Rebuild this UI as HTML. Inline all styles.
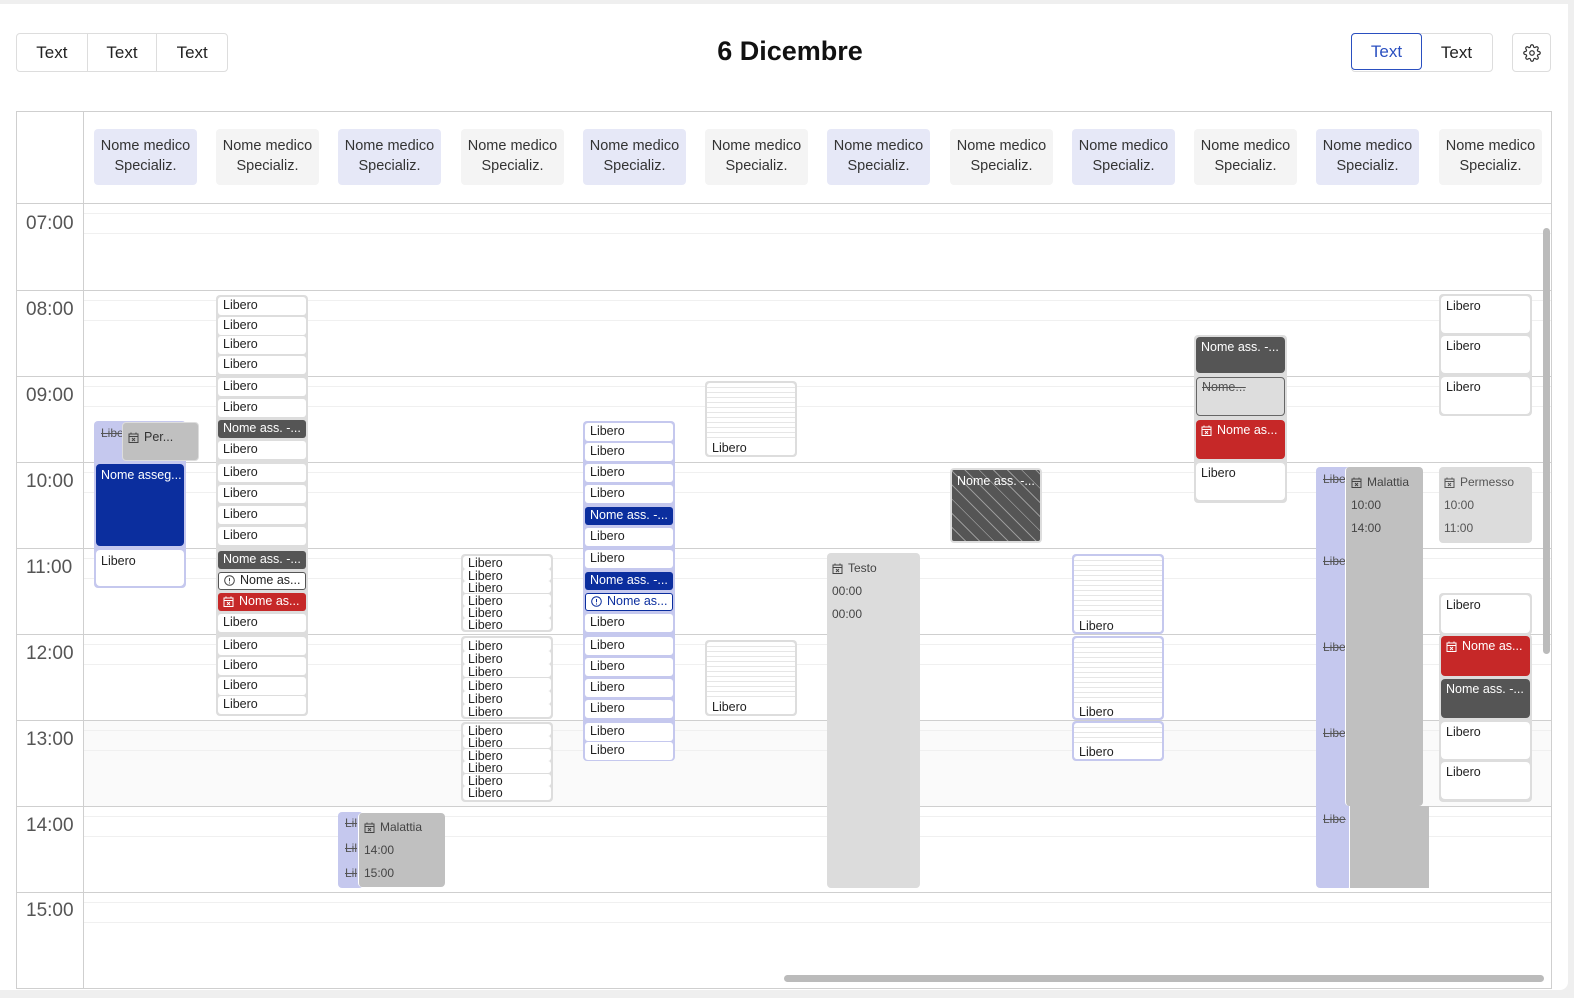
<!DOCTYPE html>
<html style="overflow:hidden"><head><meta charset="utf-8"><style>
*{box-sizing:border-box;margin:0;padding:0}
html,body{overflow:hidden}
body{width:1574px;height:998px;background:#efefef;font-family:"Liberation Sans",sans-serif;position:relative;color:#333}
.card{position:absolute;left:0;top:4px;width:1568px;height:986px;background:#fff;border-radius:0 0 8px 0}
.a{position:absolute}
.bg{position:absolute;top:33px;height:39px;border:1px solid #ddd;border-radius:4px;display:flex;background:#fff}
.bg div{height:100%;display:flex;align-items:center;justify-content:center;font-size:17px;color:#222;border-right:1px solid #ddd}
.bg div:last-child{border-right:none}
.hl{position:absolute;left:16px;width:1535px;height:1px;background:#cfcfcf}
.sl{position:absolute;left:84px;width:1467px;height:1px;background:#f0f0f0}
.tm{position:absolute;left:26px;font-size:19px;color:#555}
.ch{position:absolute;top:129px;width:103px;height:56px;border-radius:4px;font-size:14.5px;color:#333;text-align:center;line-height:19.5px;padding-top:8px}
.e{position:absolute;height:18px;font-size:12.5px;line-height:17px;padding-left:5px;border-radius:3px;background:#fff;color:#222;white-space:nowrap;overflow:hidden}
.dk{background:#555;color:#fff}.bl{background:#0b2e9e;color:#fff}.rd{background:#c62828;color:#fff}
.ol{border:1.5px solid #555;line-height:14px}.ob{border:1.5px solid #0b2e9e;color:#0b2e9e;line-height:14px}
.gc{position:absolute;background:#ddd;border-radius:4px}
.pc{position:absolute;background:#c5c8ee;border-radius:4px}
.big{position:absolute;font-size:12.5px;padding:4px 5px;border-radius:4px;color:#222;white-space:nowrap;overflow:hidden}
.st{text-decoration:line-through;color:#555;font-size:12px;position:absolute}
svg.ic{vertical-align:-2px;margin-right:5px}
.t{font-size:12px;color:#444;position:absolute;left:5px}
</style></head><body>
<div class="card"></div>
<div class="bg" style="left:16px;width:212px"><div style="width:71px">Text</div><div style="width:70px">Text</div><div style="width:70px">Text</div></div>
<div class="a" style="left:640px;width:300px;top:36px;text-align:center;font-size:27px;color:#111;font-weight:bold">6 Dicembre</div>
<div class="bg" style="left:1351px;width:142px"><div style="width:71px;border:1.5px solid #2a4fc0;border-radius:4px;color:#2a4fc0;margin:-1px">Text</div><div style="width:71px">Text</div></div>
<div class="a" style="left:1512px;top:33px;width:39px;height:39px;border:1px solid #ddd;border-radius:4px;display:flex;align-items:center;justify-content:center">
<svg width="18" height="18" viewBox="0 0 24 24" fill="none" stroke="#333" stroke-width="1.6"><circle cx="12" cy="12" r="3"/><path d="M19.4 15a1.650 1.650 0 0 0 .33 1.820l.06.06a2 2 0 1 1-2.830 2.830l-.06-.06a1.650 1.650 0 0 0-1.820-.33 1.650 1.650 0 0 0-1 1.510V21a2 2 0 1 1-4 0v-.09A1.650 1.650 0 0 0 9 19.4a1.650 1.650 0 0 0-1.820.33l-.06.06a2 2 0 1 1-2.830-2.830l.06-.06A1.650 1.650 0 0 0 4.680 15a1.650 1.650 0 0 0-1.510-1H3a2 2 0 1 1 0-4h.09A1.650 1.650 0 0 0 4.600 9a1.650 1.650 0 0 0-.33-1.820l-.06-.06a2 2 0 1 1 2.830-2.830l.06.06A1.650 1.650 0 0 0 9 4.680a1.650 1.650 0 0 0 1-1.510V3a2 2 0 1 1 4 0v.09a1.650 1.650 0 0 0 1 1.510 1.650 1.650 0 0 0 1.820-.33l.06-.06a2 2 0 1 1 2.830 2.830l-.06.06A1.650 1.650 0 0 0 19.4 9a1.650 1.650 0 0 0 1.510 1H21a2 2 0 1 1 0 4h-.09a1.650 1.650 0 0 0-1.510 1z"/></svg></div>

<div class="a" style="left:16px;top:111px;width:1536px;height:878px;border:1px solid #cfcfcf"></div>
<div class="a" style="left:83px;top:111px;width:1px;height:878px;background:#cfcfcf"></div>
<div class="a" style="left:84px;top:720px;width:1467px;height:86px;background:#fafafa"></div>
<div class="hl" style="top:203px"></div><div class="sl" style="top:213px"></div><div class="sl" style="top:233px"></div>
<div class="hl" style="top:290px"></div><div class="sl" style="top:300px"></div><div class="sl" style="top:320px"></div>
<div class="hl" style="top:376px"></div><div class="sl" style="top:386px"></div><div class="sl" style="top:406px"></div>
<div class="hl" style="top:462px"></div><div class="sl" style="top:472px"></div><div class="sl" style="top:492px"></div>
<div class="hl" style="top:548px"></div><div class="sl" style="top:558px"></div><div class="sl" style="top:578px"></div>
<div class="hl" style="top:634px"></div><div class="sl" style="top:644px"></div><div class="sl" style="top:664px"></div>
<div class="hl" style="top:720px"></div><div class="sl" style="top:730px"></div><div class="sl" style="top:750px"></div>
<div class="hl" style="top:806px"></div><div class="sl" style="top:816px"></div><div class="sl" style="top:836px"></div>
<div class="hl" style="top:892px"></div><div class="sl" style="top:902px"></div><div class="sl" style="top:922px"></div>
<div class="tm" style="top:213px">07:00</div><div class="tm" style="top:299px">08:00</div><div class="tm" style="top:385px">09:00</div><div class="tm" style="top:471px">10:00</div><div class="tm" style="top:557px">11:00</div><div class="tm" style="top:643px">12:00</div><div class="tm" style="top:729px">13:00</div><div class="tm" style="top:815px">14:00</div><div class="tm" style="top:900px">15:00</div>

<div class="ch" style="left:94px;background:#e6e8f7">Nome medico<br>Specializ.</div>
<div class="ch" style="left:216px;background:#f4f4f4">Nome medico<br>Specializ.</div>
<div class="ch" style="left:338px;background:#e6e8f7">Nome medico<br>Specializ.</div>
<div class="ch" style="left:461px;background:#f4f4f4">Nome medico<br>Specializ.</div>
<div class="ch" style="left:583px;background:#e6e8f7">Nome medico<br>Specializ.</div>
<div class="ch" style="left:705px;background:#f4f4f4">Nome medico<br>Specializ.</div>
<div class="ch" style="left:827px;background:#e6e8f7">Nome medico<br>Specializ.</div>
<div class="ch" style="left:950px;background:#f4f4f4">Nome medico<br>Specializ.</div>
<div class="ch" style="left:1072px;background:#e6e8f7">Nome medico<br>Specializ.</div>
<div class="ch" style="left:1194px;background:#f4f4f4">Nome medico<br>Specializ.</div>
<div class="ch" style="left:1316px;background:#e6e8f7">Nome medico<br>Specializ.</div>
<div class="ch" style="left:1439px;background:#f4f4f4">Nome medico<br>Specializ.</div>

<div class="pc" style="left:94px;top:421px;width:92px;height:167px"></div>
<div class="st" style="left:101px;top:426px">Libe</div>
<div class="big" style="left:122px;top:422px;width:77px;height:39px;background:#c0c0c0;border:1px solid #ddd;color:#333;padding-top:7px"><svg class="ic" width="11" height="11" viewBox="0 0 11 11" fill="none" stroke="#444"><rect x="1" y="2" width="9" height="8.5"/><path d="M1 4.5h9M3 .5v2M8 .5v2M4 6l3 3M7 6l-3 3"/></svg>Per...</div>
<div class="big" style="left:96px;top:464px;width:88px;height:82px;background:#0b2e9e;color:#fff">Nome asseg...</div>
<div class="big" style="left:96px;top:550px;width:88px;height:36px;background:#fff">Libero</div>

<div class="gc" style="left:216px;top:295px;width:92px;height:421px"></div>
<div class="e" style="left:218px;top:297px;width:88px">Libero</div>
<div class="e" style="left:218px;top:317px;width:88px">Libero</div>
<div class="e" style="left:218px;top:336px;width:88px">Libero</div>
<div class="e" style="left:218px;top:356px;width:88px">Libero</div>
<div class="e" style="left:218px;top:378px;width:88px">Libero</div>
<div class="e" style="left:218px;top:399px;width:88px">Libero</div>
<div class="e dk" style="left:218px;top:420px;width:88px">Nome ass. -...</div>
<div class="e" style="left:218px;top:441px;width:88px">Libero</div>
<div class="e" style="left:218px;top:464px;width:88px">Libero</div>
<div class="e" style="left:218px;top:485px;width:88px">Libero</div>
<div class="e" style="left:218px;top:506px;width:88px">Libero</div>
<div class="e" style="left:218px;top:527px;width:88px">Libero</div>
<div class="e dk" style="left:218px;top:551px;width:88px">Nome ass. -...</div>
<div class="e ol" style="left:218px;top:572px;width:88px"><svg class="ic" width="11" height="11" viewBox="0 0 11 11" fill="none" stroke="#444"><circle cx="5.5" cy="5.5" r="4.8"/><path d="M5.5 3v3.2M5.5 7.5v1"/></svg>Nome as...</div>
<div class="e rd" style="left:218px;top:593px;width:88px"><svg class="ic" width="11" height="11" viewBox="0 0 11 11" fill="none" stroke="#fff"><rect x="1" y="2" width="9" height="8.5"/><path d="M1 4.5h9M3 .5v2M8 .5v2M4 6l3 3M7 6l-3 3"/></svg>Nome as...</div>
<div class="e" style="left:218px;top:614px;width:88px">Libero</div>
<div class="e" style="left:218px;top:637px;width:88px">Libero</div>
<div class="e" style="left:218px;top:657px;width:88px">Libero</div>
<div class="e" style="left:218px;top:677px;width:88px">Libero</div>
<div class="e" style="left:218px;top:696px;width:88px">Libero</div>

<div class="pc" style="left:338px;top:812px;width:25px;height:76px"></div>
<div class="st" style="left:345px;top:816px">Lil</div><div class="st" style="left:345px;top:841px">Lil</div><div class="st" style="left:345px;top:866px">Lil</div>
<div class="big" style="left:358px;top:813px;width:87px;height:74px;background:#c0c0c0;border-left:1px solid #fff">
<div class="t" style="top:7px"><svg class="ic" width="11" height="11" viewBox="0 0 11 11" fill="none" stroke="#444"><rect x="1" y="2" width="9" height="8.5"/><path d="M1 4.5h9M3 .5v2M8 .5v2M4 6l3 3M7 6l-3 3"/></svg>Malattia</div>
<div class="t" style="top:30px">14:00</div><div class="t" style="top:53px">15:00</div></div>

<div class="gc" style="left:461px;top:554px;width:92px;height:78px"></div>
<div class="e" style="left:463px;top:556px;width:88px;height:13px;line-height:15px">Libero</div>
<div class="e" style="left:463px;top:569px;width:88px;height:12px;line-height:15px">Libero</div>
<div class="e" style="left:463px;top:581px;width:88px;height:12px;line-height:15px">Libero</div>
<div class="e" style="left:463px;top:594px;width:88px;height:12px;line-height:15px">Libero</div>
<div class="e" style="left:463px;top:606px;width:88px;height:12px;line-height:15px">Libero</div>
<div class="e" style="left:463px;top:618px;width:88px;height:12px;line-height:15px">Libero</div>
<div class="gc" style="left:461px;top:636px;width:92px;height:83px"></div>
<div class="e" style="left:463px;top:638px;width:88px;height:13px">Libero</div>
<div class="e" style="left:463px;top:651px;width:88px;height:13px">Libero</div>
<div class="e" style="left:463px;top:664px;width:88px;height:13px">Libero</div>
<div class="e" style="left:463px;top:678px;width:88px;height:13px">Libero</div>
<div class="e" style="left:463px;top:691px;width:88px;height:13px">Libero</div>
<div class="e" style="left:463px;top:704px;width:88px;height:13px">Libero</div>
<div class="gc" style="left:461px;top:722px;width:92px;height:80px"></div>
<div class="e" style="left:463px;top:724px;width:88px;height:12px;line-height:15px">Libero</div>
<div class="e" style="left:463px;top:736px;width:88px;height:12px;line-height:15px">Libero</div>
<div class="e" style="left:463px;top:749px;width:88px;height:12px;line-height:15px">Libero</div>
<div class="e" style="left:463px;top:761px;width:88px;height:12px;line-height:15px">Libero</div>
<div class="e" style="left:463px;top:774px;width:88px;height:12px;line-height:15px">Libero</div>
<div class="e" style="left:463px;top:786px;width:88px;height:14px;line-height:15px">Libero</div>

<div class="pc" style="left:583px;top:421px;width:92px;height:340px"></div>
<div class="e" style="left:585px;top:423px;width:88px">Libero</div>
<div class="e" style="left:585px;top:443px;width:88px">Libero</div>
<div class="e" style="left:585px;top:464px;width:88px">Libero</div>
<div class="e" style="left:585px;top:485px;width:88px">Libero</div>
<div class="e bl" style="left:585px;top:507px;width:88px">Nome ass. -...</div>
<div class="e" style="left:585px;top:528px;width:88px">Libero</div>
<div class="e" style="left:585px;top:550px;width:88px">Libero</div>
<div class="e bl" style="left:585px;top:572px;width:88px">Nome ass. -...</div>
<div class="e ob" style="left:585px;top:593px;width:88px"><svg class="ic" width="11" height="11" viewBox="0 0 11 11" fill="none" stroke="#0b2e9e"><circle cx="5.5" cy="5.5" r="4.8"/><path d="M5.5 3v3.2M5.5 7.5v1"/></svg>Nome as...</div>
<div class="e" style="left:585px;top:614px;width:88px">Libero</div>
<div class="e" style="left:585px;top:637px;width:88px">Libero</div>
<div class="e" style="left:585px;top:658px;width:88px">Libero</div>
<div class="e" style="left:585px;top:679px;width:88px">Libero</div>
<div class="e" style="left:585px;top:700px;width:88px">Libero</div>
<div class="e" style="left:585px;top:723px;width:88px">Libero</div>
<div class="e" style="left:585px;top:742px;width:88px">Libero</div>

<div class="gc" style="left:705px;top:381px;width:92px;height:76px"></div>
<div class="a" style="left:707px;top:383px;width:88px;height:72px;background:repeating-linear-gradient(#fff 0 4px,#e6e6e6 4px 5px);border-radius:3px"></div>
<div class="e" style="left:707px;top:440px;width:88px;height:15px;line-height:17px">Libero</div>
<div class="gc" style="left:705px;top:640px;width:92px;height:76px"></div>
<div class="a" style="left:707px;top:642px;width:88px;height:72px;background:repeating-linear-gradient(#fff 0 4px,#e6e6e6 4px 5px);border-radius:3px"></div>
<div class="e" style="left:707px;top:699px;width:88px;height:15px;line-height:17px">Libero</div>

<div class="big" style="left:827px;top:553px;width:93px;height:335px;background:#dcdcdc">
<div class="t" style="top:8px"><svg class="ic" width="11" height="11" viewBox="0 0 11 11" fill="none" stroke="#444"><rect x="1" y="2" width="9" height="8.5"/><path d="M1 4.5h9M3 .5v2M8 .5v2M4 6l3 3M7 6l-3 3"/></svg>Testo</div>
<div class="t" style="top:31px">00:00</div><div class="t" style="top:54px">00:00</div></div>

<div class="big" style="left:950px;top:468px;width:92px;height:75px;border:2px solid #ddd;color:#fff;background:repeating-linear-gradient(45deg,#555 0 9px,#999 9px 10px)">Nome ass. -...</div>

<div class="pc" style="left:1072px;top:554px;width:92px;height:80px"></div>
<div class="a" style="left:1074px;top:556px;width:88px;height:76px;background:repeating-linear-gradient(#fff 0 4px,#e6e6e6 4px 5px);border-radius:3px"></div>
<div class="e" style="left:1074px;top:618px;width:88px;height:14px;line-height:17px">Libero</div>
<div class="pc" style="left:1072px;top:636px;width:92px;height:84px"></div>
<div class="a" style="left:1074px;top:638px;width:88px;height:80px;background:repeating-linear-gradient(#fff 0 4px,#e6e6e6 4px 5px);border-radius:3px"></div>
<div class="e" style="left:1074px;top:704px;width:88px;height:14px;line-height:17px">Libero</div>
<div class="pc" style="left:1072px;top:721px;width:92px;height:40px"></div>
<div class="a" style="left:1074px;top:723px;width:88px;height:36px;background:repeating-linear-gradient(#fff 0 4px,#e6e6e6 4px 5px);border-radius:3px"></div>
<div class="e" style="left:1074px;top:744px;width:88px;height:15px;line-height:17px">Libero</div>

<div class="gc" style="left:1194px;top:335px;width:93px;height:168px"></div>
<div class="big" style="left:1196px;top:337px;width:89px;height:36px;background:#555;color:#fff;padding-top:3px">Nome ass. -...</div>
<div class="big" style="left:1196px;top:377px;width:89px;height:39px;background:#ddd;border:1.5px solid #666;padding-top:2px;text-decoration:line-through;color:#555">Nome...</div>
<div class="big" style="left:1196px;top:420px;width:89px;height:39px;background:#c62828;color:#fff;padding-top:3px"><svg class="ic" width="11" height="11" viewBox="0 0 11 11" fill="none" stroke="#fff"><rect x="1" y="2" width="9" height="8.5"/><path d="M1 4.5h9M3 .5v2M8 .5v2M4 6l3 3M7 6l-3 3"/></svg>Nome as...</div>
<div class="big" style="left:1196px;top:463px;width:89px;height:37px;background:#fff;padding-top:3px">Libero</div>

<div class="pc" style="left:1316px;top:467px;width:36px;height:421px"></div>
<div class="st" style="left:1323px;top:472px">Libe</div><div class="st" style="left:1323px;top:554px">Libe</div><div class="st" style="left:1323px;top:640px">Libe</div><div class="st" style="left:1323px;top:726px">Libe</div><div class="st" style="left:1323px;top:812px">Libe</div>
<div class="big" style="left:1345px;top:467px;width:78px;height:339px;background:#c0c0c0;border-left:1px solid #fff">
<div class="t" style="top:8px"><svg class="ic" width="11" height="11" viewBox="0 0 11 11" fill="none" stroke="#444"><rect x="1" y="2" width="9" height="8.5"/><path d="M1 4.5h9M3 .5v2M8 .5v2M4 6l3 3M7 6l-3 3"/></svg>Malattia</div>
<div class="t" style="top:31px">10:00</div><div class="t" style="top:54px">14:00</div></div>
<div class="a" style="left:1349px;top:806px;width:80px;height:82px;background:#c0c0c0;border-left:1px solid #fff"></div>

<div class="gc" style="left:1439px;top:294px;width:93px;height:122px"></div>
<div class="big" style="left:1441px;top:296px;width:89px;height:37px;background:#fff;padding-top:3px">Libero</div>
<div class="big" style="left:1441px;top:336px;width:89px;height:37px;background:#fff;padding-top:3px">Libero</div>
<div class="big" style="left:1441px;top:377px;width:89px;height:37px;background:#fff;padding-top:3px">Libero</div>
<div class="big" style="left:1439px;top:467px;width:93px;height:76px;background:#dcdcdc">
<div class="t" style="top:8px;color:#555"><svg class="ic" width="11" height="11" viewBox="0 0 11 11" fill="none" stroke="#555"><rect x="1" y="2" width="9" height="8.5"/><path d="M1 4.5h9M3 .5v2M8 .5v2M4 6l3 3M7 6l-3 3"/></svg>Permesso</div>
<div class="t" style="top:31px;color:#555">10:00</div><div class="t" style="top:54px;color:#555">11:00</div></div>
<div class="gc" style="left:1439px;top:593px;width:93px;height:42px"></div>
<div class="big" style="left:1441px;top:595px;width:89px;height:38px;background:#fff;padding-top:3px">Libero</div>
<div class="gc" style="left:1439px;top:634px;width:93px;height:168px"></div>
<div class="big" style="left:1441px;top:636px;width:89px;height:40px;background:#c62828;color:#fff;padding-top:3px"><svg class="ic" width="11" height="11" viewBox="0 0 11 11" fill="none" stroke="#fff"><rect x="1" y="2" width="9" height="8.5"/><path d="M1 4.5h9M3 .5v2M8 .5v2M4 6l3 3M7 6l-3 3"/></svg>Nome as...</div>
<div class="big" style="left:1441px;top:679px;width:89px;height:39px;background:#555;color:#fff;padding-top:3px">Nome ass. -...</div>
<div class="big" style="left:1441px;top:722px;width:89px;height:37px;background:#fff;padding-top:3px">Libero</div>
<div class="big" style="left:1441px;top:762px;width:89px;height:37px;background:#fff;padding-top:3px">Libero</div>

<div class="a" style="left:1543px;top:228px;width:7px;height:426px;background:#bbb;border-radius:4px"></div>
<div class="a" style="left:784px;top:975px;width:760px;height:7px;background:#bbb;border-radius:4px"></div>
</body></html>
